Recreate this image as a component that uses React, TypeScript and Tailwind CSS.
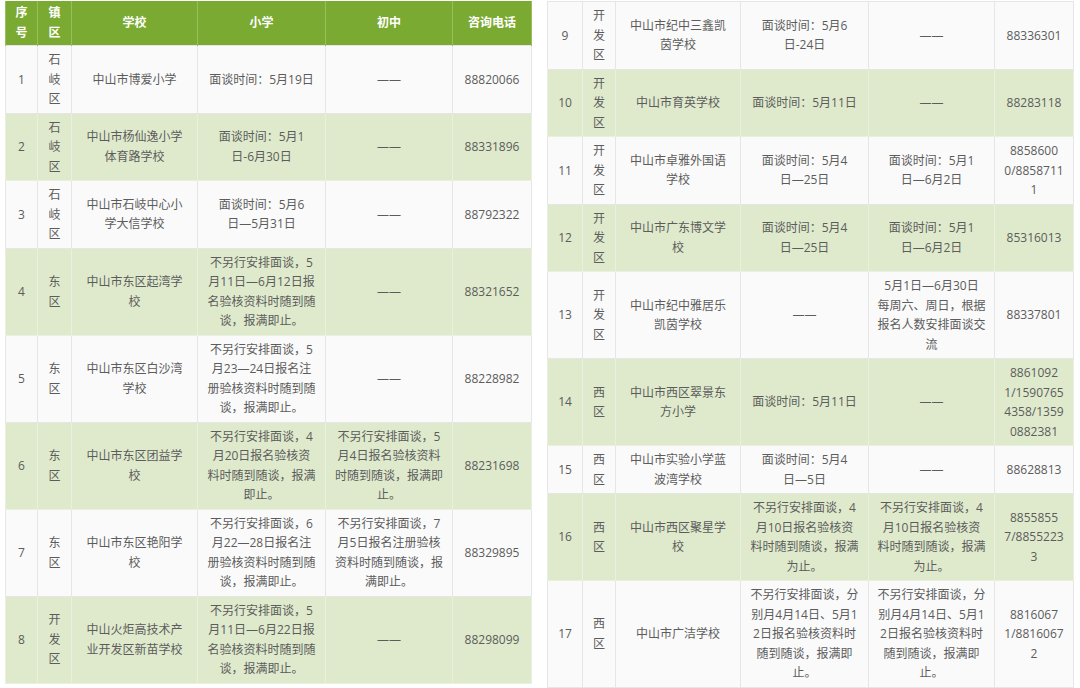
type Cell = string[];
type Row = { cells: Cell[] };

const SJQ = ["石", "岐", "区"];
const DQ = ["东", "区"];
const KFQ = ["开", "发", "区"];
const XQ = ["西", "区"];
const DASH = ["——"];
const EMPTY = [""];

const leftRows: Row[] = [
  { cells: [["1"], SJQ, ["中山市博爱小学"], ["面谈时间：5月19日"], DASH, ["88820066"]] },
  { cells: [["2"], SJQ, ["中山市杨仙逸小学", "体育路学校"], ["面谈时间：5月1", "日-6月30日"], DASH, ["88331896"]] },
  { cells: [["3"], SJQ, ["中山市石岐中心小", "学大信学校"], ["面谈时间：5月6", "日—5月31日"], DASH, ["88792322"]] },
  {
    cells: [
      ["4"],
      DQ,
      ["中山市东区起湾学", "校"],
      ["不另行安排面谈，5", "月11日—6月12日报", "名验核资料时随到随", "谈，报满即止。"],
      DASH,
      ["88321652"],
    ],
  },
  {
    cells: [
      ["5"],
      DQ,
      ["中山市东区白沙湾", "学校"],
      ["不另行安排面谈，5", "月23—24日报名注", "册验核资料时随到随", "谈，报满即止。"],
      DASH,
      ["88228982"],
    ],
  },
  {
    cells: [
      ["6"],
      DQ,
      ["中山市东区团益学", "校"],
      ["不另行安排面谈，4", "月20日报名验核资", "料时随到随谈，报满", "即止。"],
      ["不另行安排面谈，5", "月4日报名验核资料", "时随到随谈，报满即", "止。"],
      ["88231698"],
    ],
  },
  {
    cells: [
      ["7"],
      DQ,
      ["中山市东区艳阳学", "校"],
      ["不另行安排面谈，6", "月22—28日报名注", "册验核资料时随到随", "谈，报满即止。"],
      ["不另行安排面谈，7", "月5日报名注册验核", "资料时随到随谈，报", "满即止。"],
      ["88329895"],
    ],
  },
  {
    cells: [
      ["8"],
      KFQ,
      ["中山火炬高技术产", "业开发区新苗学校"],
      ["不另行安排面谈，5", "月11日—6月22日报", "名验核资料时随到随", "谈，报满即止。"],
      DASH,
      ["88298099"],
    ],
  },
];

const rightRows: Row[] = [
  { cells: [["9"], KFQ, ["中山市纪中三鑫凯", "茵学校"], ["面谈时间：5月6", "日-24日"], DASH, ["88336301"]] },
  { cells: [["10"], KFQ, ["中山市育英学校"], ["面谈时间：5月11日"], DASH, ["88283118"]] },
  {
    cells: [
      ["11"],
      KFQ,
      ["中山市卓雅外国语", "学校"],
      ["面谈时间：5月4", "日—25日"],
      ["面谈时间：5月1", "日—6月2日"],
      ["8858600", "0/8858711", "1"],
    ],
  },
  {
    cells: [
      ["12"],
      KFQ,
      ["中山市广东博文学", "校"],
      ["面谈时间：5月4", "日—25日"],
      ["面谈时间：5月1", "日—6月2日"],
      ["85316013"],
    ],
  },
  {
    cells: [
      ["13"],
      KFQ,
      ["中山市纪中雅居乐", "凯茵学校"],
      DASH,
      ["5月1日—6月30日", "每周六、周日，根据", "报名人数安排面谈交", "流"],
      ["88337801"],
    ],
  },
  {
    cells: [
      ["14"],
      XQ,
      ["中山市西区翠景东", "方小学"],
      ["面谈时间：5月11日"],
      DASH,
      ["8861092", "1/1590765", "4358/1359", "0882381"],
    ],
  },
  { cells: [["15"], XQ, ["中山市实验小学蓝", "波湾学校"], ["面谈时间：5月4", "日—5日"], DASH, ["88628813"]] },
  {
    cells: [
      ["16"],
      XQ,
      ["中山市西区聚星学", "校"],
      ["不另行安排面谈，4", "月10日报名验核资", "料时随到随谈，报满", "为止。"],
      ["不另行安排面谈，4", "月10日报名验核资", "料时随到随谈，报满", "为止。"],
      ["8855855", "7/8855223", "3"],
    ],
  },
  {
    cells: [
      ["17"],
      XQ,
      ["中山市广洁学校"],
      ["不另行安排面谈，分", "别月4月14日、5月1", "2日报名验核资料时", "随到随谈，报满即", "止。"],
      ["不另行安排面谈，分", "别月4月14日、5月1", "2日报名验核资料时", "随到随谈，报满即", "止。"],
      ["8816067", "1/8816067", "2"],
    ],
  },
  // next row only peeks in at the bottom edge
  { cells: [EMPTY, EMPTY, EMPTY, EMPTY, EMPTY, EMPTY] },
];

const header: Cell[] = [["序", "号"], ["镇", "区"], ["学校"], ["小学"], ["初中"], ["咨询电话"]];

function Lines({ lines }: { lines: string[] }) {
  return (
    <>
      {lines.map((l, i) => (
        <div key={i} className="whitespace-nowrap">
          {l || "\u00a0"}
        </div>
      ))}
    </>
  );
}

function ScheduleTable({ cols, rows, showHeader }: { cols: number[]; rows: Row[]; showHeader?: boolean }) {
  const width = cols.reduce((a, b) => a + b, 0);
  return (
    <table className="shrink-0 table-fixed border-collapse" style={{ width }}>
      <colgroup>
        {cols.map((w, i) => (
          <col key={i} style={{ width: w }} />
        ))}
      </colgroup>
      {showHeader && (
        <thead>
          <tr className="bg-[#7aaa31]">
            {header.map((c, i) => (
              <th
                key={i}
                className="h-[44px] border-x border-[#98bf5c] py-[2px] text-center align-middle text-[12px] font-bold leading-[20px] text-white"
              >
                <Lines lines={c} />
              </th>
            ))}
          </tr>
        </thead>
      )}
      <tbody>
        {rows.map((r, i) => {
          const green = i % 2 === 1;
          return (
            <tr key={i} className={green ? "bg-[#dfeacc]" : "bg-[#fafafa]"}>
              {r.cells.map((c, j) => (
                <td
                  key={j}
                  className={
                    "border px-0 py-[4px] text-center align-middle text-[12px] leading-[19.5px] text-[#5c5c5c] " +
                    (green ? "border-[#eaf0e0]" : "border-[#e6e6e6]")
                  }
                >
                  <Lines lines={c} />
                </td>
              ))}
            </tr>
          );
        })}
      </tbody>
    </table>
  );
}

export default function App() {
  return (
    <div className="flex h-[688px] w-[1080px] items-start gap-[15px] overflow-hidden bg-white pl-[5px] pt-px font-['Open_Sans','Noto_Sans_CJK_SC',sans-serif]">
      <ScheduleTable cols={[32, 34, 126, 128, 127, 79]} rows={leftRows} showHeader />
      <ScheduleTable cols={[35, 33, 125, 128, 126, 79]} rows={rightRows} />
    </div>
  );
}
